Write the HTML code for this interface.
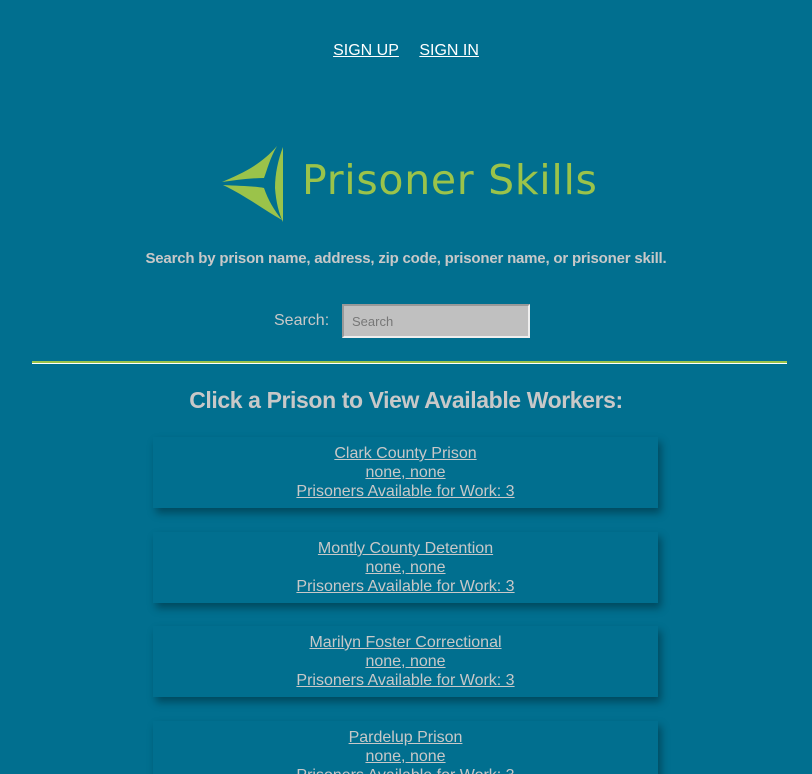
<!DOCTYPE html>
<html style="overflow:hidden"><head><style>
html,body{overflow:hidden;height:774px}
body{margin:0;background:#016f8f;font-family:"Liberation Sans",Roboto,sans-serif;width:812px;position:relative}
.nav{position:absolute;top:42px;left:0;width:812px;text-align:center;font-size:16px}
.nav a{color:#fff;text-decoration:underline;margin:0 8px}
.logo{position:absolute;left:220px;top:144px}
.lt{position:absolute;left:302px;top:156px;font-family:"DejaVu Sans",sans-serif;font-size:41px;color:#9bc34a;letter-spacing:0.7px;white-space:nowrap}
.sub{position:absolute;top:250px;width:812px;text-align:center;color:#c8c8c8;font-size:15px;font-weight:bold;letter-spacing:-0.2px}
.sl{position:absolute;left:274px;top:312px;color:#c8c8c8;font-size:16px}
.inp{position:absolute;left:342px;top:304px;background:#c0c0c0;border-top:2px solid #999;border-left:2px solid #999;border-right:2px solid #eee;border-bottom:2px solid #eee;width:184px;height:30px}
.inp span{position:absolute;left:8px;top:8px;font-size:13px;color:#777}
.hr1{position:absolute;left:32px;top:361px;width:755px;height:2px;background:#9bc34a}
.hr2{position:absolute;left:32px;top:363px;width:755px;height:1px;background:#fff}
h2{position:absolute;top:387px;margin:0;width:812px;text-align:center;color:#c8c8c8;font-size:23px;font-weight:bold;letter-spacing:-0.4px}
.card{position:absolute;left:153px;width:505px;height:71px;background:#016f8f;box-shadow:3px 5px 8px rgba(0,0,0,.35);text-align:center;font-size:16px;line-height:19px;padding-top:7px;box-sizing:border-box}
.card a{color:#c8c8c8;text-decoration:underline;display:block}
</style></head><body>
<div class="nav"><a>SIGN UP</a> <a>SIGN IN</a></div>
<svg class="logo" width="66" height="80" viewBox="0 0 66 80">
<path d="M2 38 C20 30 40 22 57 2 C50 14 47 26 44 34 C30 34 16 36 2 38Z" fill="#9bc34a"/>
<path d="M3 41 C20 42 34 42 44 44 C48 56 54 66 62 76 C44 66 26 52 3 41Z" fill="#9bc34a"/>
<path d="M63 3 L63 78 C59 70 56 58 55 44 C55 30 58 16 63 3Z" fill="#9bc34a"/>
</svg>
<div class="lt">Prisoner Skills</div>
<div class="sub">Search by prison name, address, zip code, prisoner name, or prisoner skill.</div>
<div class="sl">Search:</div>
<div class="inp"><span>Search</span></div>
<div class="hr1"></div><div class="hr2"></div>
<h2>Click a Prison to View Available Workers:</h2>
<div class="card" style="top:437px"><a>Clark County Prison</a><a>none, none</a><a>Prisoners Available for Work: 3</a></div>
<div class="card" style="top:532px"><a>Montly County Detention</a><a>none, none</a><a>Prisoners Available for Work: 3</a></div>
<div class="card" style="top:626px"><a>Marilyn Foster Correctional</a><a>none, none</a><a>Prisoners Available for Work: 3</a></div>
<div class="card" style="top:721px"><a>Pardelup Prison</a><a>none, none</a><a>Prisoners Available for Work: 3</a></div>
</body></html>
